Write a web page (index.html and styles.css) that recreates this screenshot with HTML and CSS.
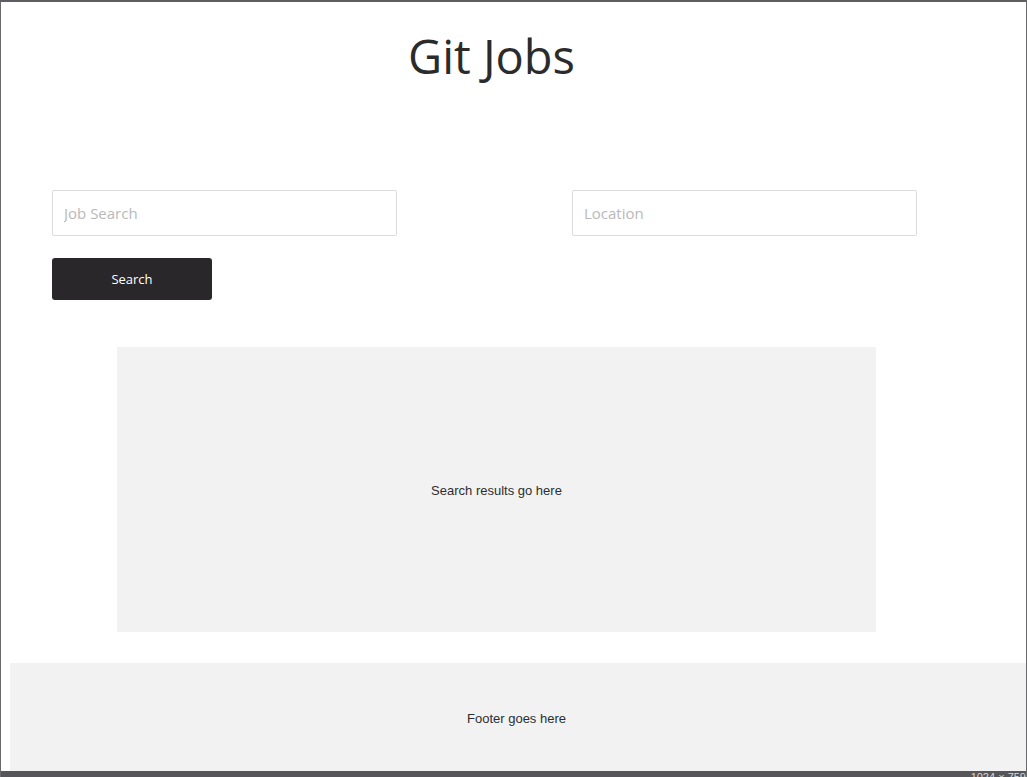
FILE: index.html
```html
<!DOCTYPE html>
<html lang="en">
<head>
<meta charset="utf-8">
<title>Git Jobs</title>
<link rel="stylesheet" href="styles.css">
</head>
<body>
<div class="frame">
  <div class="page">
    <header class="header">
      <h1 class="title">Git Jobs</h1>
    </header>
    <form class="search">
      <div class="fields">
        <input class="field" type="text" placeholder="Job Search">
        <input class="field" type="text" placeholder="Location">
      </div>
      <button class="btn" type="button">Search</button>
    </form>
    <section class="results">Search results go here</section>
    <footer class="footer">Footer goes here</footer>
  </div>
  <div class="statusbar"><span class="dims">1024 × 759</span></div>
</div>
</body>
</html>
```

FILE: styles.css
```css
* { box-sizing: border-box; }
html, body { margin: 0; padding: 0; }
body {
  width: 1027px;
  height: 777px;
  overflow: hidden;
  background: #fff;
  font-family: "Open Sans", "Liberation Sans", sans-serif;
}
.frame {
  height: 777px;
  display: flex;
  flex-direction: column;
  border-top: 2px solid #5e5e62;
  border-left: 1px solid #6a6a6e;
  border-right: 1px solid #6a6a6e;
}
.page {
  flex: 1;
  display: flex;
  flex-direction: column;
  overflow: hidden;
}
.header {
  display: flex;
  justify-content: center;
  padding-right: 44px;
}
.title {
  margin: 22px 0 0;
  font-weight: 400;
  font-size: 47px;
  line-height: 64px;
  color: #2b2b2b;
}
.search {
  margin-top: 102px;
  padding-left: 51px;
  display: flex;
  flex-direction: column;
  gap: 22px;
}
.fields {
  display: flex;
  gap: 175px;
}
.field {
  width: 345px;
  height: 46px;
  border: 1px solid #dcdcdc;
  border-radius: 2px;
  padding: 0 11px;
  font-family: "Open Sans", sans-serif;
  font-size: 15px;
  color: #333;
  outline: none;
}
.field::placeholder { color: #b9b9b9; }
.btn {
  width: 160px;
  height: 42px;
  border: none;
  border-radius: 3px;
  background: #2a272b;
  color: #fff;
  font-family: "Open Sans", sans-serif;
  font-size: 13px;
  padding: 0;
}
.results {
  margin: 47px 0 0 116px;
  width: 759px;
  height: 285px;
  background: #f2f2f2;
  display: flex;
  align-items: center;
  justify-content: center;
  font-family: "Liberation Sans", Arial, sans-serif;
  font-size: 13px;
  color: #2e2e2e;
  padding-top: 2px;
}
.footer {
  margin: 31px 0 0 9px;
  height: 108px;
  background: #f2f2f2;
  display: flex;
  align-items: center;
  justify-content: center;
  font-family: "Liberation Sans", Arial, sans-serif;
  font-size: 13px;
  color: #2e2e2e;
  flex-shrink: 0;
  padding: 2px 3px 0 0;
}
.statusbar {
  height: 6px;
  background: #55555a;
  overflow: hidden;
  display: flex;
  justify-content: flex-end;
  flex-shrink: 0;
}
.dims {
  font-family: "Liberation Sans", Arial, sans-serif;
  font-size: 11px;
  line-height: 11px;
  color: #d8d8d8;
  margin-top: 1px;
  margin-right: 0;
}
```
